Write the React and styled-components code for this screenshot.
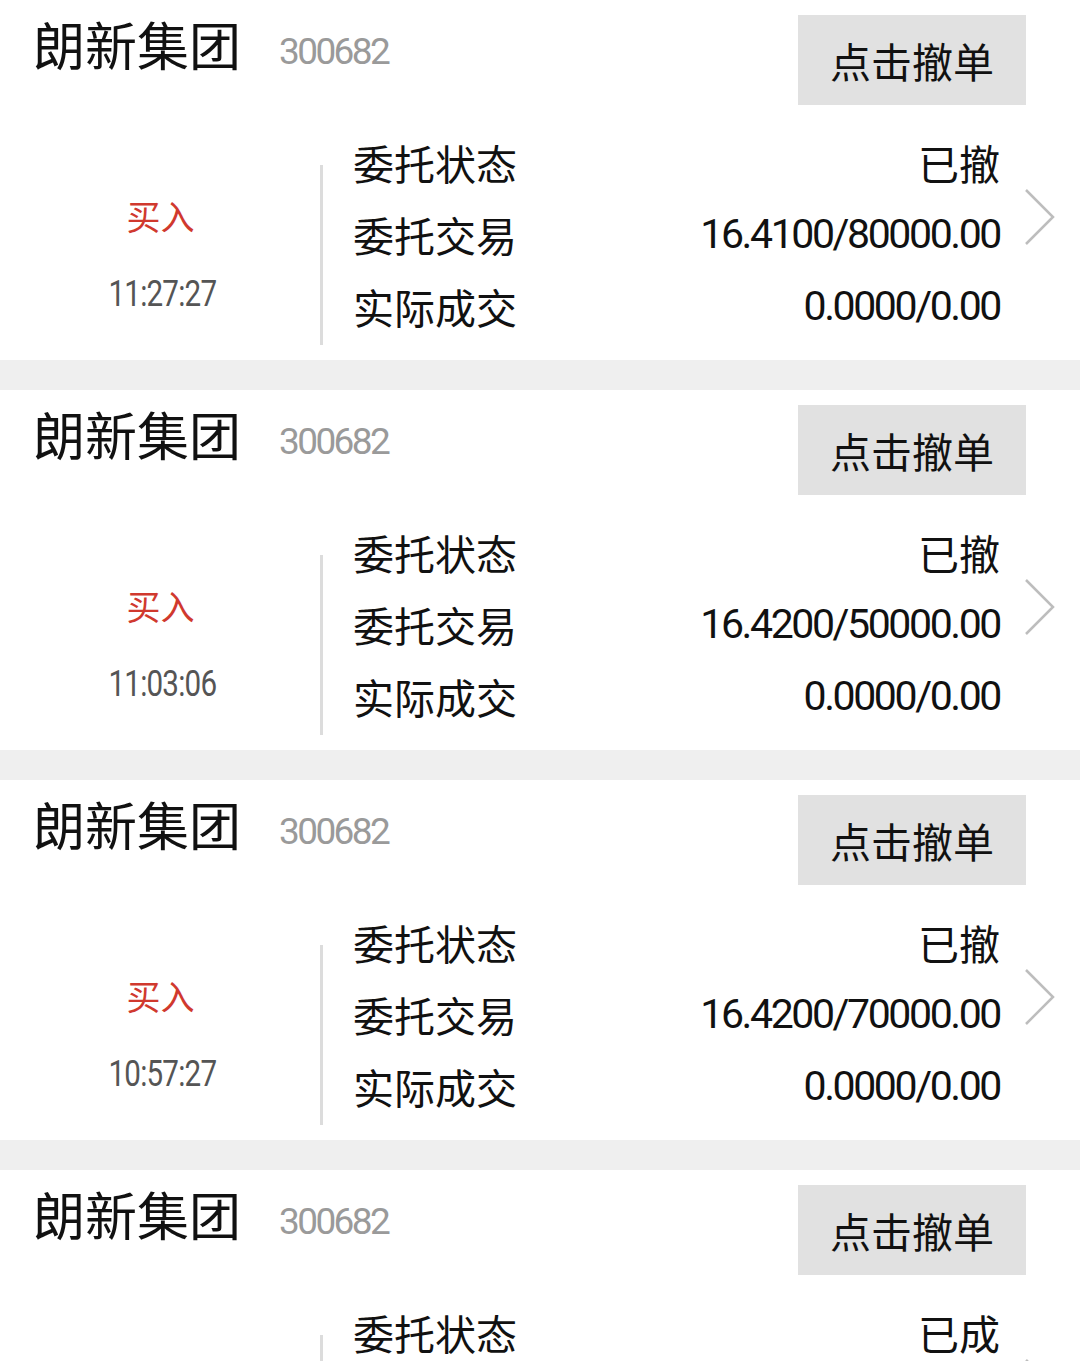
import React from 'react';
import styled, { createGlobalStyle } from 'styled-components';

const GlobalStyle = createGlobalStyle`
  html, body {
    margin: 0;
    padding: 0;
    background: #efefef;
    font-family: "Noto Sans CJK SC", Roboto, sans-serif;
    overflow: hidden;
  }
`;

const List = styled.div`
  display: flex;
  flex-direction: column;
  gap: 30px;
`;

const Card = styled.div`
  background: #fff;
  height: 360px;
  display: flex;
  flex-direction: column;
`;

const Header = styled.div`
  display: flex;
  align-items: flex-start;
  padding: 15px 54px 0 33px;
  height: 90px;
`;

const Name = styled.div`
  font-size: 52px;
  color: #111;
  line-height: 1;
  margin-top: 3px;
`;

const Code = styled.div`
  font-family: Roboto, sans-serif;
  font-size: 37px;
  line-height: 1;
  letter-spacing: -2.6px;
  color: #9a9a9a;
  margin-left: 38px;
  margin-top: 18px;
  flex: 1;
`;

const CancelButton = styled.button`
  width: 228px;
  height: 90px;
  border: none;
  background: #e1e1e1;
  font-family: "Noto Sans CJK SC", sans-serif;
  font-size: 41px;
  color: #111;
  padding: 0;
`;

const Body = styled.div`
  display: flex;
  padding-top: 21px;
`;

const Side = styled.div`
  width: 320px;
  height: 180px;
  margin-top: 39px;
  border-right: 3px solid #dcdcdc;
  display: flex;
  flex-direction: column;
  align-items: center;
  justify-content: center;
  gap: 42px;
`;

const Direction = styled.div`
  color: #d0392e;
  font-size: 34px;
  line-height: 1;
  margin-left: 1px;
`;

const Time = styled.div`
  font-family: Roboto, sans-serif;
  color: #555;
  font-size: 37px;
  letter-spacing: -1px;
  line-height: 1;
  margin-left: 4px;
  transform: scaleX(0.8);
`;

const Rows = styled.div`
  flex: 1;
  padding-left: 30px;
  display: flex;
  flex-direction: column;
`;

const Row = styled.div`
  height: 72px;
  display: flex;
  align-items: center;
  justify-content: space-between;
`;

const Label = styled.span`
  font-size: 41px;
  color: #111;
`;

const Value = styled.span`
  font-family: ${p => (p.$num ? 'Roboto, sans-serif' : '"Noto Sans CJK SC", sans-serif')};
  font-size: 41px;
  letter-spacing: ${p => (p.$num ? '-2.4px' : '0')};
  color: #111;
`;

const Arrow = styled.div`
  width: 80px;
  display: flex;
  align-items: flex-start;
  justify-content: center;
  padding-top: 62px;
`;

const orders = [
  { time: '11:27:27', status: '已撤', entrust: '16.4100/80000.00' },
  { time: '11:03:06', status: '已撤', entrust: '16.4200/50000.00' },
  { time: '10:57:27', status: '已撤', entrust: '16.4200/70000.00' },
  { time: '10:41:15', status: '已成', entrust: '16.4200/60000.00' },
];

function Order({ order }) {
  return (
    <Card>
      <Header>
        <Name>朗新集团</Name>
        <Code>300682</Code>
        <CancelButton>点击撤单</CancelButton>
      </Header>
      <Body>
        <Side>
          <Direction>买入</Direction>
          <Time>{order.time}</Time>
        </Side>
        <Rows>
          <Row>
            <Label>委托状态</Label>
            <Value>{order.status}</Value>
          </Row>
          <Row>
            <Label>委托交易</Label>
            <Value $num>{order.entrust}</Value>
          </Row>
          <Row>
            <Label>实际成交</Label>
            <Value $num>0.0000/0.00</Value>
          </Row>
        </Rows>
        <Arrow>
          <svg width="32" height="58" viewBox="0 0 32 58">
            <polyline points="2,2 29,29 2,56" fill="none" stroke="#bdbdbd" strokeWidth="2.5" />
          </svg>
        </Arrow>
      </Body>
    </Card>
  );
}

export default function App() {
  return (
    <>
      <GlobalStyle />
      <List>
        {orders.map((o, i) => (
          <Order key={i} order={o} />
        ))}
      </List>
    </>
  );
}
